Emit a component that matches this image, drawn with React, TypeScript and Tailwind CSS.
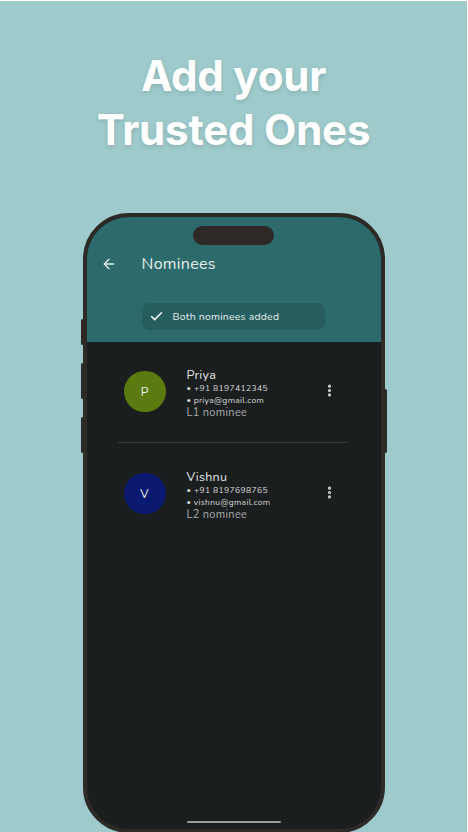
import React from 'react';
import { ArrowLeft, Check, MoreVertical } from 'lucide-react';

type Nominee = {
  initial: string;
  name: string;
  phone: string;
  email: string;
  level: string;
  color: string;
};

const nominees: Nominee[] = [
  { initial: 'P', name: 'Priya', phone: '+91 8197412345', email: 'priya@gmail.com', level: 'L1 nominee', color: 'bg-[#5b7a10]' },
  { initial: 'V', name: 'Vishnu', phone: '+91 8197698765', email: 'vishnu@gmail.com', level: 'L2 nominee', color: 'bg-[#0b1a70]' },
];

function NomineeRow({ n }: { n: Nominee }) {
  return (
    <div className="flex items-start pl-[37px] pr-[44px]">
      <div className={`mt-[4px] flex h-[41px] w-[42px] items-center justify-center rounded-full ${n.color}`}>
        <span className="text-[12px] text-[#e8ecec]">{n.initial}</span>
      </div>
      <div className="ml-[21px] flex-1">
        <div className="text-[12.5px] leading-[15px] tracking-[0.3px] text-[#e4e6e6]">{n.name}</div>
        <div className="text-[8.5px] leading-[12px] tracking-[0.4px] text-[#d8dada]">• {n.phone}</div>
        <div className="text-[8.5px] leading-[12px] tracking-[0.3px] text-[#d8dada]">• {n.email}</div>
        <div className="text-[11px] leading-[13px] tracking-[0.3px] text-[#a9adad]">{n.level}</div>
      </div>
      <MoreVertical className="mt-[16px] h-[15px] w-[15px] text-[#d6d8d8]" strokeWidth={3} />
    </div>
  );
}

export default function App() {
  return (
    <div className="h-[832px] w-full overflow-hidden border-t border-r border-white bg-[#9ecacb] font-['Nunito','Lato','Noto_Sans',sans-serif]">
      <h1 className="pt-[48px] text-center font-['Inter',sans-serif] text-[42px] leading-[54px] font-bold tracking-[-0.2px] text-white [text-shadow:0_2px_4px_rgba(0,0,0,0.12)]">
        Add your
        <br />
        Trusted Ones
      </h1>

      <div className="relative mx-auto mt-[56px] h-[620px] w-[302px]">
        {/* side buttons */}
        <div className="absolute top-[106px] -left-[2px] h-[26px] w-[3px] rounded-sm bg-[#2e2a28]" />
        <div className="absolute top-[150px] -left-[2px] h-[36px] w-[3px] rounded-sm bg-[#2e2a28]" />
        <div className="absolute top-[204px] -left-[2px] h-[36px] w-[3px] rounded-sm bg-[#2e2a28]" />
        <div className="absolute top-[176px] -right-[2px] h-[64px] w-[3px] rounded-sm bg-[#2e2a28]" />

        <div className="relative flex h-full w-full flex-col overflow-hidden rounded-[46px] border-[4px] border-[#2e2a28] bg-[#1b1e1f]">
          {/* header */}
          <div className="h-[125px] bg-[#2c6a6b]">
            <div className="mx-auto mt-[9px] h-[19px] w-[81px] rounded-full bg-[#2e2826]" />
            <div className="mt-[9px] flex items-center pl-[14px]">
              <ArrowLeft className="h-[16px] w-[16px] text-[#e6eeee]" strokeWidth={2} />
              <span className="ml-[25px] text-[16px] leading-[20px] tracking-[0.3px] text-[#e6eeee]">Nominees</span>
            </div>
            <div className="mt-[29px] ml-[55px] flex h-[27px] w-[183px] items-center rounded-[8px] bg-[#265d5e] pl-[7px]">
              <Check className="h-[15px] w-[15px] text-[#eef2f2]" strokeWidth={2.5} />
              <span className="ml-[9px] text-[10.5px] tracking-[0.2px] text-[#e2eaea]">Both nominees added</span>
            </div>
          </div>

          {/* list */}
          <div className="pt-[25px]">
            <NomineeRow n={nominees[0]} />
            <div className="mt-[23px] mr-[33px] ml-[31px] h-px bg-[#34393a]" />
            <div className="mt-[26px]">
              <NomineeRow n={nominees[1]} />
            </div>
          </div>

          <div className="mt-auto mb-[6px] flex justify-center">
            <div className="h-[2px] w-[94px] rounded-full bg-[#9c9d9d]" />
          </div>
        </div>
      </div>
    </div>
  );
}
